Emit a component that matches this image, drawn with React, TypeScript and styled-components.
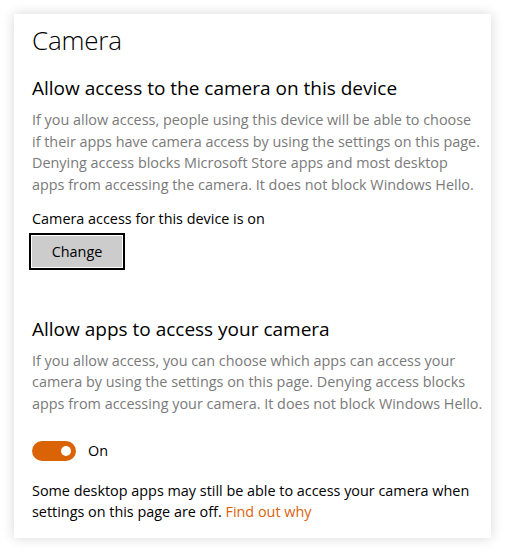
import styled, { createGlobalStyle } from 'styled-components';

const GlobalStyle = createGlobalStyle`
  html, body {
    margin: 0;
    padding: 0;
    background: #ffffff;
  }
  body {
    font-family: "Open Sans", "Noto Sans", sans-serif;
    color: #000000;
  }
`;

const Page = styled.div`
  padding: 14px;
  width: 505px;
  height: 552px;
  box-sizing: border-box;
`;

const Card = styled.div`
  width: 477px;
  height: 524px;
  box-sizing: border-box;
  background: #ffffff;
  box-shadow: 0 0 12px rgba(0, 0, 0, 0.16);
  padding: 8px 2px 0 18px;
  display: flex;
  flex-direction: column;
`;

const Title = styled.h1`
  margin: 0;
  font-size: 26px;
  font-weight: 300;
  line-height: 36px;
  letter-spacing: -0.2px;
`;

const Section = styled.section<{ $top: number }>`
  margin-top: ${(p) => p.$top}px;
  display: flex;
  flex-direction: column;
`;

const Heading = styled.h2`
  margin: 0;
  font-size: 19px;
  font-weight: 400;
  line-height: 28px;
`;

const Desc = styled.p`
  margin: 7px 0 0;
  font-size: 14.4px;
  line-height: 21.6px;
  color: #7a7a7a;
  white-space: nowrap;
`;

const Note = styled.p<{ $top: number }>`
  margin: ${(p) => p.$top}px 0 0;
  font-size: 14.4px;
  line-height: 21.5px;
  color: #000000;
  white-space: nowrap;
`;

const Button = styled.button`
  margin-top: 3px;
  margin-left: -3px;
  width: 96px;
  height: 37px;
  box-sizing: border-box;
  background: #cccccc;
  border: 2px solid #000000;
  box-shadow: inset 0 0 0 1px #ffffff;
  font-family: inherit;
  font-size: 14.4px;
  color: #000000;
  padding: 0;
  cursor: pointer;
`;

const ToggleRow = styled.div`
  margin-top: 26px;
  display: flex;
  align-items: center;
  gap: 12px;
`;

const Track = styled.div`
  width: 44px;
  height: 20px;
  border-radius: 10px;
  background: #da6405;
  display: flex;
  align-items: center;
  justify-content: flex-end;
  padding-right: 5px;
  box-sizing: border-box;
`;

const Knob = styled.span`
  width: 10px;
  height: 10px;
  border-radius: 50%;
  background: #ffffff;
`;

const ToggleLabel = styled.span`
  font-size: 14.4px;
  line-height: 20px;
`;

const Link = styled.a`
  color: #d9630b;
  text-decoration: none;
`;

export default function App() {
  return (
    <>
      <GlobalStyle />
      <Page>
        <Card>
          <Title>Camera</Title>
          <Section $top={16}>
            <Heading>Allow access to the camera on this device</Heading>
            <Desc>
              If you allow access, people using this device will be able to choose
              <br />
              if their apps have camera access by using the settings on this page.
              <br />
              Denying access blocks Microsoft Store apps and most desktop
              <br />
              apps from accessing the camera. It does not block Windows Hello.
            </Desc>
            <Note $top={13}>Camera access for this device is on</Note>
            <Button>Change</Button>
          </Section>
          <Section $top={45}>
            <Heading>Allow apps to access your camera</Heading>
            <Desc>
              If you allow access, you can choose which apps can access your
              <br />
              camera by using the settings on this page. Denying access blocks
              <br />
              apps from accessing your camera. It does not block Windows Hello.
            </Desc>
            <ToggleRow>
              <Track>
                <Knob />
              </Track>
              <ToggleLabel>On</ToggleLabel>
            </ToggleRow>
            <Note $top={19}>
              Some desktop apps may still be able to access your camera when
              <br />
              settings on this page are off. <Link href="#">Find out why</Link>
            </Note>
          </Section>
        </Card>
      </Page>
    </>
  );
}
